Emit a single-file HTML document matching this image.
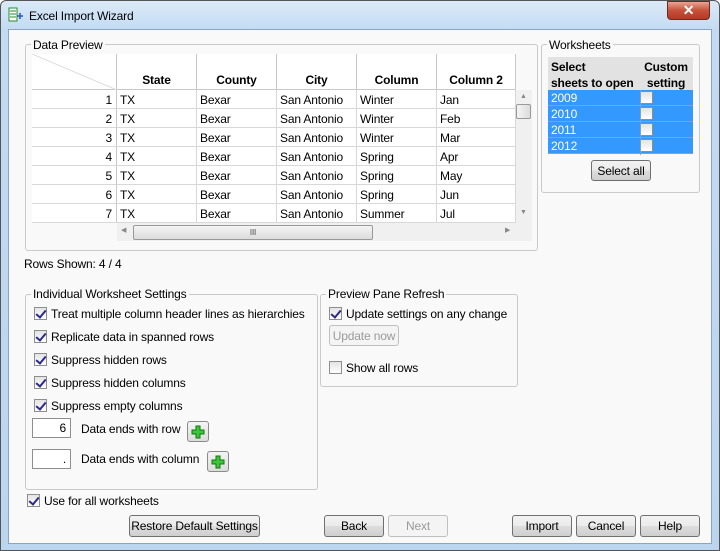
<!DOCTYPE html>
<html><head><style>
*{box-sizing:border-box}
body{margin:0;width:720px;height:551px;overflow:hidden;background:#fff;font-family:"Liberation Sans",sans-serif;font-size:12px;color:#000;position:relative;letter-spacing:-0.15px}
.a{position:absolute}
.t{position:absolute;margin-top:1px}
.win{left:0;top:0;width:720px;height:551px;background:linear-gradient(#dbeaf8,#c2daf2 30px,#bcd5ef);border:1px solid #555;border-radius:6px 6px 0 0}
.client{left:8px;top:29px;width:704px;height:515px;background:#f9f9f9;border:1px solid #8aa4c2}
.grp{border:1px solid #c9c9c9;border-radius:3px}
.lg{background:#f9f9f9;padding:0 2px;line-height:14px}
.cb{width:13px;height:13px;border:1px solid #8e8e8e;background:linear-gradient(#e4e4e4,#fff);}
.cb.on::after{content:"";position:absolute;left:3px;top:0px;width:4px;height:8px;border:solid #2a2a8a;border-width:0 2px 2px 0;transform:rotate(40deg)}
.btn{border:1px solid #707070;border-radius:3px;background:linear-gradient(#f2f2f2,#ebebeb 50%,#dddddd 51%,#cfcfcf);text-align:center;line-height:20px;white-space:nowrap}
.dis{border-color:#bfbfbf;color:#9a9a9a;background:#f4f4f4}
.cell{position:absolute;height:19px;line-height:20px;border-right:1px solid #d8d8d8;border-bottom:1px solid #d8d8d8;background:#fff;padding-left:3px;white-space:nowrap;overflow:hidden}
.hd{position:absolute;top:54px;height:36px;line-height:53px;text-align:center;font-weight:bold;border-right:1px solid #c8c8c8;border-bottom:1px solid #c8c8c8;background:#fff}
.ws{position:absolute;left:548px;width:145px;height:16px;background:#3399ff;color:#fff;border-bottom:1px solid #8a9fb8;line-height:17px;padding-left:3px}
.ws .cb{position:absolute;left:92px;top:1px;width:13px;height:13px}
.in{border:1px solid #8e8e8e;background:#fff;text-align:right;padding-right:4px;line-height:19px}
.plus{border:1px solid #8a8a8a;border-radius:3px;background:linear-gradient(#f4f4f4,#dcdcdc)}
</style></head><body>
<div class="a win"></div>
<svg class="a" style="left:8px;top:7px" width="16" height="16"><rect x="1" y="1" width="8" height="13" fill="#fff" stroke="#2a8a2a"/><path d="M2 4h6M2 7h6M2 10h6" stroke="#2a8a2a"/><path d="M9 9l6 0M12 6l0 6" stroke="#2a5ab0" stroke-width="1.5"/></svg>
<div class="t" style="left:29px;top:8px;font-size:12px">Excel Import Wizard</div>
<div class="a" style="left:667px;top:1px;width:43px;height:19px;border:1px solid #6b2a20;border-radius:0 0 4px 4px;background:linear-gradient(#e8a593,#c7503a 50%,#b33a24);color:#fff;text-align:center;font-weight:bold;line-height:17px;font-size:14px">✕</div>
<div class="a client"></div>

<div class="a grp" style="left:25px;top:44px;width:513px;height:207px"></div>
<div class="a lg" style="left:31px;top:38px">Data Preview</div>
<div class="a" style="left:32px;top:54px;width:85px;height:36px;border-right:1px solid #c8c8c8;border-bottom:1px solid #c8c8c8;background:#fff"></div>
<svg class="a" style="left:32px;top:54px" width="85" height="36"><line x1="0" y1="0" x2="85" y2="36" stroke="#dcdcdc"/></svg>
<div class="hd" style="left:117px;width:80px">State</div>
<div class="hd" style="left:197px;width:80px">County</div>
<div class="hd" style="left:277px;width:80px">City</div>
<div class="hd" style="left:357px;width:80px">Column</div>
<div class="hd" style="left:437px;width:79px">Column 2</div>
<div id="rows"></div>
<div class="a" style="left:516px;top:90px;width:16px;height:133px;background:#f0f0f0"></div>
<div class="a" style="left:520px;top:93px;font-size:7px;color:#888">▲</div>
<div class="a" style="left:516px;top:104px;width:15px;height:15px;border:1px solid #999;border-radius:2px;background:linear-gradient(90deg,#f4f4f4,#dcdcdc)"></div>
<div class="a" style="left:520px;top:209px;font-size:7px;color:#888">▼</div>
<div class="a" style="left:117px;top:223px;width:415px;height:18px;background:#f0f0f0"></div>
<div class="a" style="left:121px;top:226px;font-size:7px;color:#888">◀</div>
<div class="a" style="left:505px;top:226px;font-size:7px;color:#888">▶</div>
<div class="a" style="left:133px;top:225px;width:240px;height:15px;border:1px solid #999;border-radius:2px;background:linear-gradient(#f4f4f4,#dcdcdc);text-align:center;font-size:8px;line-height:13px;color:#444">III</div>
<div class="t" style="left:24px;top:256px">Rows Shown: 4 / 4</div>

<div class="a grp" style="left:541px;top:44px;width:159px;height:149px"></div>
<div class="a lg" style="left:547px;top:38px">Worksheets</div>
<div class="a" style="left:548px;top:57px;width:145px;height:33px;background:#e2e2e2;font-weight:bold;line-height:16px">
<div class="t" style="left:3px;top:1px">Select<br>sheets to open</div>
<div class="t" style="left:93px;top:1px;text-align:center;width:50px">Custom<br>setting</div></div>
<div class="ws" style="top:90px">2009<div class="cb a"></div></div>
<div class="ws" style="top:106px">2010<div class="cb a"></div></div>
<div class="ws" style="top:122px">2011<div class="cb a"></div></div>
<div class="ws" style="top:138px">2012<div class="cb a"></div></div>
<div class="a" style="left:640px;top:90px;width:1px;height:65px;background:#8a9fb8"></div>
<div class="a btn" style="left:591px;top:160px;width:60px;height:21px">Select all</div>

<div class="a grp" style="left:25px;top:294px;width:293px;height:196px"></div>
<div class="a lg" style="left:31px;top:287px">Individual Worksheet Settings</div>
<div class="a cb on" style="left:34px;top:307px"></div><div class="t" style="left:51px;top:306px">Treat multiple column header lines as hierarchies</div>
<div class="a cb on" style="left:34px;top:330px"></div><div class="t" style="left:51px;top:329px">Replicate data in spanned rows</div>
<div class="a cb on" style="left:34px;top:353px"></div><div class="t" style="left:51px;top:352px">Suppress hidden rows</div>
<div class="a cb on" style="left:34px;top:376px"></div><div class="t" style="left:51px;top:375px">Suppress hidden columns</div>
<div class="a cb on" style="left:34px;top:399px"></div><div class="t" style="left:51px;top:398px">Suppress empty columns</div>
<div class="a in" style="left:32px;top:418px;width:39px;height:20px">6</div>
<div class="t" style="left:81px;top:421px">Data ends with row</div>
<div class="a plus" style="left:187px;top:421px;width:22px;height:21px"></div>
<svg class="a" style="left:190px;top:424px" width="16" height="16"><path d="M6 2h4v4h4v4h-4v4h-4v-4h-4v-4h4z" fill="#3fc43f" stroke="#0a7a0a"/></svg>
<div class="a in" style="left:32px;top:449px;width:39px;height:20px">.</div>
<div class="t" style="left:81px;top:451px">Data ends with column</div>
<div class="a plus" style="left:207px;top:451px;width:22px;height:21px"></div>
<svg class="a" style="left:210px;top:454px" width="16" height="16"><path d="M6 2h4v4h4v4h-4v4h-4v-4h-4v-4h4z" fill="#3fc43f" stroke="#0a7a0a"/></svg>

<div class="a grp" style="left:320px;top:294px;width:198px;height:93px"></div>
<div class="a lg" style="left:326px;top:287px">Preview Pane Refresh</div>
<div class="a cb on" style="left:329px;top:307px"></div><div class="t" style="left:346px;top:306px">Update settings on any change</div>
<div class="a btn dis" style="left:329px;top:325px;width:70px;height:21px">Update now</div>
<div class="a cb" style="left:329px;top:361px"></div><div class="t" style="left:346px;top:360px">Show all rows</div>

<div class="a cb on" style="left:27px;top:494px"></div><div class="t" style="left:44px;top:493px">Use for all worksheets</div>

<div class="a btn" style="left:129px;top:515px;width:131px;height:22px">Restore Default Settings</div>
<div class="a btn" style="left:324px;top:515px;width:60px;height:22px">Back</div>
<div class="a btn dis" style="left:388px;top:515px;width:60px;height:22px">Next</div>
<div class="a btn" style="left:512px;top:515px;width:60px;height:22px">Import</div>
<div class="a btn" style="left:576px;top:515px;width:60px;height:22px">Cancel</div>
<div class="a btn" style="left:640px;top:515px;width:60px;height:22px">Help</div>

<script>
var d=[["TX","Bexar","San Antonio","Winter","Jan"],["TX","Bexar","San Antonio","Winter","Feb"],["TX","Bexar","San Antonio","Winter","Mar"],["TX","Bexar","San Antonio","Spring","Apr"],["TX","Bexar","San Antonio","Spring","May"],["TX","Bexar","San Antonio","Spring","Jun"],["TX","Bexar","San Antonio","Summer","Jul"]];
var xs=[117,197,277,357,437],ws=[80,80,80,80,79],h="";
d.forEach(function(r,i){var y=90+i*19;
h+='<div class="cell" style="left:32px;top:'+y+'px;width:85px;text-align:right;padding-right:4px;background:#fff;border-right-color:#c8c8c8">'+(i+1)+'</div>';
r.forEach(function(c,j){h+='<div class="cell" style="left:'+xs[j]+'px;top:'+y+'px;width:'+ws[j]+'px">'+c+'</div>';});});
document.getElementById('rows').innerHTML=h;
</script>
</body></html>
